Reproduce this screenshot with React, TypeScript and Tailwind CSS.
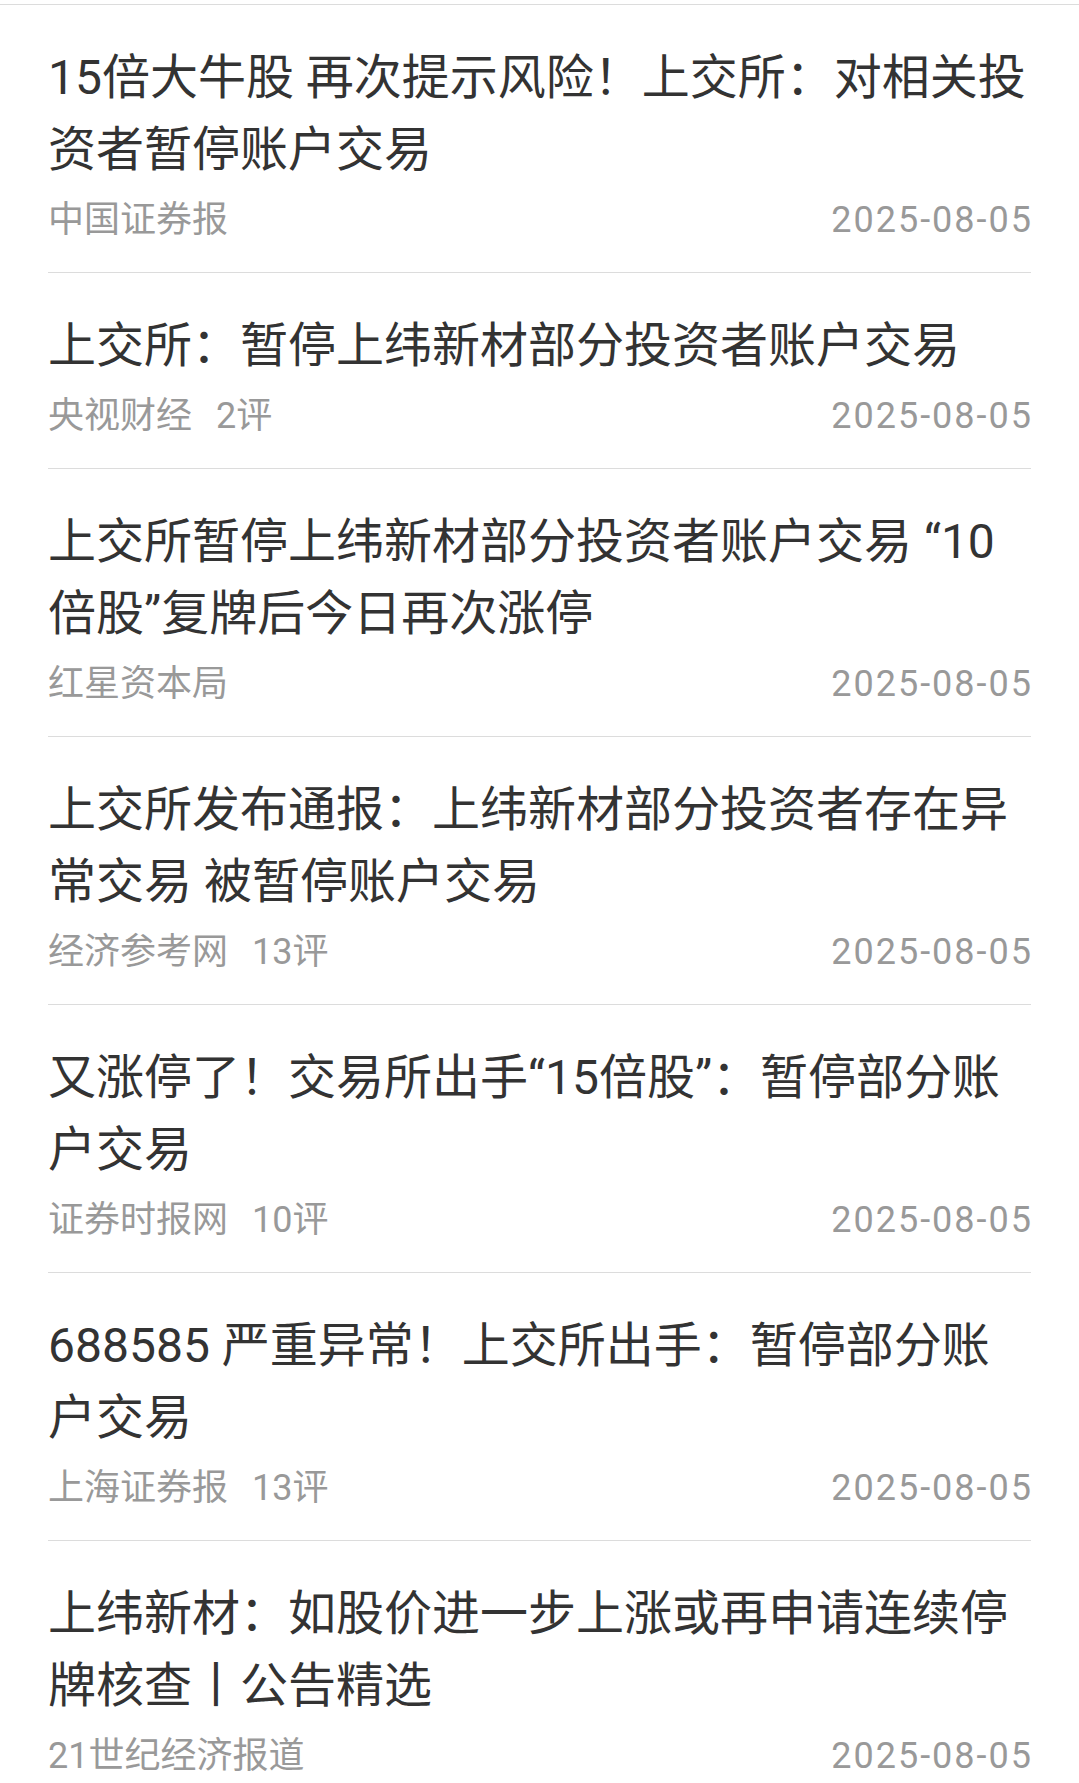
const newsItems = [
  {
    lines: ["15倍大牛股 再次提示风险！上交所：对相关投", "资者暂停账户交易"],
    source: "中国证券报",
    comments: "",
  },
  {
    lines: ["上交所：暂停上纬新材部分投资者账户交易"],
    source: "央视财经",
    comments: "2评",
  },
  {
    lines: ["上交所暂停上纬新材部分投资者账户交易 “10", "倍股”复牌后今日再次涨停"],
    source: "红星资本局",
    comments: "",
  },
  {
    lines: ["上交所发布通报：上纬新材部分投资者存在异", "常交易 被暂停账户交易"],
    source: "经济参考网",
    comments: "13评",
  },
  {
    lines: ["又涨停了！交易所出手“15倍股”：暂停部分账", "户交易"],
    source: "证券时报网",
    comments: "10评",
  },
  {
    lines: ["688585 严重异常！上交所出手：暂停部分账", "户交易"],
    source: "上海证券报",
    comments: "13评",
  },
  {
    lines: ["上纬新材：如股价进一步上涨或再申请连续停", "牌核查丨公告精选"],
    source: "21世纪经济报道",
    comments: "",
  },
];

export default function App() {
  return (
    <main
      className="min-h-screen bg-white"
      style={{ fontFamily: 'Roboto, "Noto Sans CJK SC", sans-serif' }}
    >
      <div className="h-[5px] border-b border-[#dcdcdc]" />

      <ul className="mx-[48px]">
        {newsItems.map((item) => (
          <li
            key={item.lines[0]}
            className="border-b border-[#dcdcdc] pb-[26px] pt-[37px]"
          >
            <h2 className="whitespace-nowrap text-[48px] leading-[72px] font-normal text-[#333333]">
              {item.lines.map((line, index) => (
                <span key={index} className="block">
                  {line}
                </span>
              ))}
            </h2>
            <div className="mt-[8px] flex items-center justify-between text-[36px] leading-[52px] text-[#999999]">
              <div className="flex items-center gap-[24px]">
                <span>{item.source}</span>
                {item.comments && <span>{item.comments}</span>}
              </div>
              <span className="-mr-[2px] tracking-[2px]">2025-08-05</span>
            </div>
          </li>
        ))}
      </ul>
    </main>
  );
}
